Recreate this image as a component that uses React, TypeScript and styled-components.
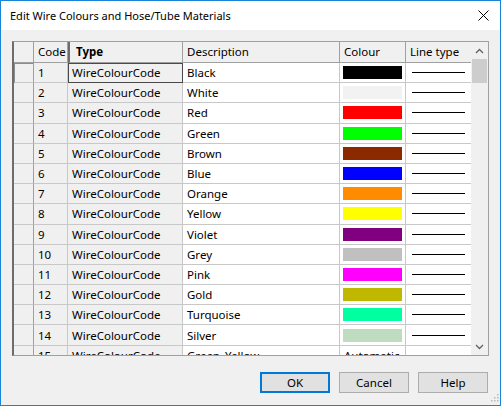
import styled, { createGlobalStyle } from 'styled-components';

type wireRow = {
  code: number;
  description: string;
  colour?: string;
};

const rows: wireRow[] = [
  { code: 1, description: 'Black', colour: '#000000' },
  { code: 2, description: 'White', colour: '#f2f2f2' },
  { code: 3, description: 'Red', colour: '#ff0000' },
  { code: 4, description: 'Green', colour: '#00ff00' },
  { code: 5, description: 'Brown', colour: '#8b2a00' },
  { code: 6, description: 'Blue', colour: '#0000ff' },
  { code: 7, description: 'Orange', colour: '#ff8c00' },
  { code: 8, description: 'Yellow', colour: '#ffff00' },
  { code: 9, description: 'Violet', colour: '#800080' },
  { code: 10, description: 'Grey', colour: '#c0c0c0' },
  { code: 11, description: 'Pink', colour: '#ff00ff' },
  { code: 12, description: 'Gold', colour: '#c0b800' },
  { code: 13, description: 'Turquoise', colour: '#00ffa0' },
  { code: 14, description: 'Silver', colour: '#c0dcc0' },
  { code: 15, description: 'Green_Yellow' },
];

const GlobalStyle = createGlobalStyle`
  body {
    margin: 0;
    font-family: 'Noto Sans', 'Open Sans', sans-serif;
    font-size: 11px;
    color: #000;
  }
  * {
    box-sizing: border-box;
  }
`;

function App() {
  return (
    <>
      <GlobalStyle />
      <Window>
        <TitleBar>
          <span>Edit Wire Colours and Hose/Tube Materials</span>
          <svg width='11' height='11' viewBox='0 0 11 11'>
            <path d='M0.5 0.5 L10.5 10.5 M10.5 0.5 L0.5 10.5' stroke='#000' strokeWidth='1' />
          </svg>
        </TitleBar>
        <Body>
          <Grid>
            <Table>
              <GridRow>
                <HeaderCell />
                <HeaderCell>Code</HeaderCell>
                <HeaderCell bold>Type</HeaderCell>
                <HeaderCell>Description</HeaderCell>
                <HeaderCell>Colour</HeaderCell>
                <HeaderCell>Line type</HeaderCell>
              </GridRow>
              {rows.map((row, i) => (
                <GridRow key={row.code}>
                  <RowHeader current={i === 0} />
                  <Cell readOnly>{row.code}</Cell>
                  <Cell readOnly focused={i === 0}>
                    WireColourCode
                  </Cell>
                  <Cell>{row.description}</Cell>
                  <Cell>{row.colour ? <Swatch style={{ background: row.colour }} /> : 'Automatic'}</Cell>
                  <Cell>{row.colour && <LineSample />}</Cell>
                </GridRow>
              ))}
            </Table>
            <ScrollBar>
              <ScrollArrow>
                <svg width='9' height='6' viewBox='0 0 9 6'>
                  <path d='M1 5 L4.5 1.5 L8 5' stroke='#606060' strokeWidth='1.3' fill='none' />
                </svg>
              </ScrollArrow>
              <Thumb />
              <Track />
              <ScrollArrow>
                <svg width='9' height='6' viewBox='0 0 9 6'>
                  <path d='M1 1 L4.5 4.5 L8 1' stroke='#606060' strokeWidth='1.3' fill='none' />
                </svg>
              </ScrollArrow>
            </ScrollBar>
          </Grid>
          <Footer>
            <Button primary>OK</Button>
            <Button>Cancel</Button>
            <Button>Help</Button>
          </Footer>
          <Grip>
            <svg width='10' height='10' viewBox='0 0 10 10'>
              <g fill='#b8b8b8'>
                <rect x='8' y='0' width='1.5' height='1.5' />
                <rect x='5' y='3' width='1.5' height='1.5' />
                <rect x='8' y='3' width='1.5' height='1.5' />
                <rect x='2' y='6' width='1.5' height='1.5' />
                <rect x='5' y='6' width='1.5' height='1.5' />
                <rect x='8' y='6' width='1.5' height='1.5' />
              </g>
            </svg>
          </Grip>
        </Body>
      </Window>
    </>
  );
}

const Window = styled.div`
  width: 501px;
  height: 406px;
  border: 1px solid #1883d7;
  background: #f0f0f0;
  display: flex;
  flex-direction: column;
`;
const TitleBar = styled.div`
  height: 29px;
  flex-shrink: 0;
  background: #fff;
  display: flex;
  align-items: center;
  justify-content: space-between;
  padding: 0 11px 0 9px;
  font-size: 11px;
`;
const Body = styled.div`
  position: relative;
  flex: 1;
  display: flex;
  flex-direction: column;
  padding: 11px 11px 0 11px;
`;
const Grid = styled.div`
  display: flex;
  height: 315px;
  border: 1px solid #a0a0a0;
  border-left: 2px solid #6d6d6d;
  background: #fff;
  overflow: hidden;
`;
const Table = styled.div`
  flex: 1;
  overflow: hidden;
`;
const GridRow = styled.div`
  display: grid;
  grid-template-columns: 20px 34px 115px 157px 66px 66px;
  height: 20.2px;
  &:first-child {
    height: 21px;
  }
`;
const HeaderCell = styled.div<{ bold?: boolean }>`
  background: #f0f0f0;
  border-right: 1px solid #a0a0a0;
  border-bottom: 1px solid #a0a0a0;
  border-left: ${({ bold }) => (bold ? '2px solid #6d6d6d' : 'none')};
  padding: 2px 0 0 ${({ bold }) => (bold ? '6px' : '4px')};
  font-weight: ${({ bold }) => (bold ? 'bold' : 'normal')};
  font-size: 11.5px;
  white-space: nowrap;
  overflow: hidden;
`;
const RowHeader = styled.div<{ current?: boolean }>`
  background: #f0f0f0;
  border-right: 1px solid #a0a0a0;
  border-bottom: 1px solid #c8c8c8;
  border-top: ${({ current }) => (current ? '1px solid #8c8c8c' : 'none')};
  border-left: ${({ current }) => (current ? '1px solid #8c8c8c' : 'none')};
`;
const Cell = styled.div<{ readOnly?: boolean; focused?: boolean }>`
  background: ${({ readOnly }) => (readOnly ? '#f0f0f0' : '#fff')};
  border-right: 1px solid #c8c8c8;
  border-bottom: 1px solid #c8c8c8;
  outline: ${({ focused }) => (focused ? '1px solid #4a4a4a' : 'none')};
  outline-offset: -1px;
  box-shadow: ${({ focused }) => (focused ? 'inset 1px 1px 0 #a0a0a0' : 'none')};
  padding: 0 3px 0 4px;
  font-size: 11.5px;
  display: flex;
  align-items: center;
  justify-content: flex-start;
  white-space: nowrap;
  overflow: hidden;
`;
const Swatch = styled.div`
  width: 59px;
  height: 13px;
  margin-left: -1px;
`;
const LineSample = styled.div`
  width: 53px;
  height: 1px;
  margin-left: 2px;
  background: #000;
`;
const ScrollBar = styled.div`
  width: 17px;
  flex-shrink: 0;
  background: #f0f0f0;
  display: flex;
  flex-direction: column;
`;
const ScrollArrow = styled.div`
  height: 17px;
  display: flex;
  align-items: center;
  justify-content: center;
`;
const Thumb = styled.div`
  height: 24px;
  margin: 0 1px;
  background: #cdcdcd;
`;
const Track = styled.div`
  flex: 1;
`;
const Footer = styled.div`
  display: flex;
  justify-content: flex-end;
  gap: 9px;
  padding: 16px 1px 0 0;
`;
const Button = styled.button<{ primary?: boolean }>`
  width: 70px;
  height: 21px;
  background: #e1e1e1;
  border: ${({ primary }) => (primary ? '2px solid #0078d7' : '1px solid #adadad')};
  font-family: 'Noto Sans', 'Open Sans', sans-serif;
  font-size: 11.5px;
  color: #000;
  padding: 0;
`;
const Grip = styled.div`
  position: absolute;
  right: 1px;
  bottom: 1px;
  display: flex;
`;

export default App;
